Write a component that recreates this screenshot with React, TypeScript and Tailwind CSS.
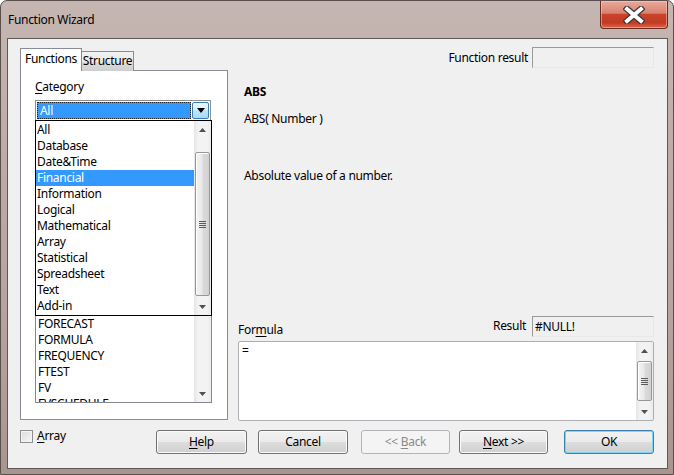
import React from "react";

const FONT = "font-['Noto_Sans',sans-serif] tracking-[-0.3px]";

function Arrow({ dir }: { dir: "up" | "down" }) {
  return (
    <svg width="7" height="4" viewBox="0 0 7 4">
      <path d={dir === "up" ? "M0 4 L3.5 0 L7 4Z" : "M0 0 L7 0 L3.5 4Z"} fill="#505050" />
    </svg>
  );
}

function Thumb({ h }: { h: string }) {
  return (
    <div
      className={`${h} mx-[1px] flex items-center justify-center rounded-[2px] border border-[#979797] bg-[linear-gradient(90deg,#f4f4f4,#e9e9e9_45%,#dadada_55%,#d2d2d2)] shadow-[inset_1px_1px_0_#fff]`}
    >
      <div className="flex flex-col gap-[1px]">
        <div className="h-[1px] w-[7px] bg-[#5a5a5a]" />
        <div className="h-[1px] w-[7px] bg-[#5a5a5a]" />
        <div className="h-[1px] w-[7px] bg-[#5a5a5a]" />
        <div className="h-[1px] w-[7px] bg-[#5a5a5a]" />
      </div>
    </div>
  );
}

function ScrollBar({ gap, thumb }: { gap?: string; thumb?: string }) {
  return (
    <div className="flex w-[17px] flex-col self-stretch bg-[linear-gradient(90deg,#e6e6e6,#f3f3f3_25%,#f3f3f3_75%,#ebebeb)]">
      <div className="flex h-[17px] shrink-0 items-center justify-center">
        <Arrow dir="up" />
      </div>
      {gap && <div className={gap} />}
      {thumb && <Thumb h={thumb} />}
      <div className="flex-1" />
      <div className="flex h-[17px] shrink-0 items-center justify-center">
        <Arrow dir="down" />
      </div>
    </div>
  );
}

function Btn({
  children,
  cls,
  variant = "normal",
}: {
  children: React.ReactNode;
  cls: string;
  variant?: "normal" | "disabled" | "default";
}) {
  const base =
    "flex h-[24px] items-center justify-center rounded-[3px] border text-[12px] leading-none";
  const v =
    variant === "disabled"
      ? "border-[#b0b4b8] bg-[#f4f4f4] text-[#8a8a8a]"
      : variant === "default"
      ? "border-[#3c7fb1] bg-[linear-gradient(#f2f2f2,#ebebeb_48%,#dddddd_52%,#cfcfcf)] text-black shadow-[inset_0_0_0_1px_#7fd3f3]"
      : "border-[#707070] bg-[linear-gradient(#f2f2f2,#ebebeb_48%,#dddddd_52%,#cfcfcf)] text-black shadow-[inset_0_0_0_1px_#fbfbfb]";
  return <div className={`${base} ${v} ${cls}`}>{children}</div>;
}

const categories = [
  "All",
  "Database",
  "Date&Time",
  "Financial",
  "Information",
  "Logical",
  "Mathematical",
  "Array",
  "Statistical",
  "Spreadsheet",
  "Text",
  "Add-in",
];

const functions = ["FORECAST", "FORMULA", "FREQUENCY", "FTEST", "FV", "FVSCHEDULE"];

export default function App() {
  return (
    <div
      className={`${FONT} flex h-[475px] w-[674px] flex-col overflow-hidden rounded-t-[7px] border border-[#5b4f4d] bg-[linear-gradient(180deg,#c6b6b2_0%,#bdaca8_30%,#b5a29e_70%,#a9958f_100%)] text-[12px] text-black`}
    >
      {/* title bar */}
      <div className="flex h-[37px] shrink-0 items-start">
        <div className="ml-[7px] mt-[11px] text-[12px] leading-[16px] text-black">Function Wizard</div>
        <div className="ml-auto mr-[5px] flex h-[28px] w-[68px] items-center justify-center rounded-b-[4px] border border-t-0 border-[#6b2a20] bg-[linear-gradient(180deg,#e9a99c_0%,#d98271_45%,#c9442c_50%,#c23a23_80%,#d9654a_100%)] shadow-[inset_0_0_0_1px_rgba(255,220,210,0.45)]">
          <svg width="22" height="18" viewBox="0 0 22 18">
            <path d="M4 3 L18 15 M18 3 L4 15" stroke="#3a3a3a" strokeWidth="6.5" strokeLinecap="square" />
            <path d="M4 3 L18 15 M18 3 L4 15" stroke="#ffffff" strokeWidth="4" strokeLinecap="square" />
          </svg>
        </div>
      </div>

      {/* client area */}
      <div className="ml-[6px] mr-[5px] flex h-[431px] flex-col border border-[#5e5856] bg-[#f0f0f0] px-[12px] pt-[8px]">
        {/* upper section */}
        <div className="flex h-[374px]">
          {/* left column: tab control */}
          <div className="flex w-[208px] flex-col pt-[1px]">
            <div className="relative z-10 flex h-[23px] items-end">
              <div className="flex h-[23px] w-[62px] items-start justify-center border border-b-0 border-[#898c95] bg-white pt-[2px] leading-[16px]">
                Functions
              </div>
              <div className="flex h-[20px] w-[52px] items-start justify-center border border-l-0 border-b-0 border-[#898c95] bg-[linear-gradient(#f2f2f2,#ebebeb_50%,#dddddd_50%,#cfcfcf)] pt-[1px] leading-[16px]">
                Structure
              </div>
            </div>
            <div className="-mt-[1px] flex h-[350px] flex-col border border-[#898c95] bg-white pl-[14px] pt-[8px]">
              <div className="leading-[16px]">
                <span className="underline underline-offset-2">C</span>ategory
              </div>
              <div className="relative mt-[5px] flex w-[177px] flex-col">
                {/* combo */}
                <div className="flex h-[21px] w-[176px] border border-[#8e8f8f] bg-white p-[1px]">
                  <div className="flex flex-1 items-center border border-dotted border-[#222] bg-[#3399ff] pl-[2px] leading-[16px] text-white">
                    All
                  </div>
                  <div className="ml-[1px] flex w-[17px] items-center justify-center rounded-[2px] border border-[#3c7fb1] bg-[linear-gradient(#eaf6fd,#d9f0fc_50%,#bee6fd_50%,#a7d9f5)]">
                    <svg width="8" height="5" viewBox="0 0 8 5">
                      <path d="M0 0 L8 0 L4 5Z" fill="#000" />
                    </svg>
                  </div>
                </div>
                {/* function listbox (upper rows hidden behind the open dropdown) */}
                <div className="mt-[1px] flex h-[281px] w-[177px] overflow-hidden border border-[#828790] bg-white">
                  <div className="flex flex-1 flex-col overflow-hidden pl-[2px] pt-[193px]">
                    {functions.map((f) => (
                      <div key={f} className="h-[16px] shrink-0 leading-[16px]">
                        {f}
                      </div>
                    ))}
                  </div>
                  <ScrollBar />
                </div>
                {/* dropdown list (open) */}
                <div className="absolute left-0 top-[20px] z-20 flex h-[196px] w-[177px] border border-black bg-white">
                  <div className="flex flex-1 flex-col pt-[1px]">
                    {categories.map((c) => (
                      <div
                        key={c}
                        className={`h-[16px] pl-[1px] leading-[16px] ${
                          c === "Financial" ? "bg-[#3399ff] text-white" : ""
                        }`}
                      >
                        {c}
                      </div>
                    ))}
                  </div>
                  <ScrollBar gap="h-[14px]" thumb="h-[144px]" />
                </div>
              </div>
            </div>
          </div>

          {/* right column */}
          <div className="ml-[10px] flex w-[416px] flex-col">
            <div className="flex h-[21px] items-center justify-end">
              <span className="mr-[4px] leading-[16px]">Function result</span>
              <div className="h-[21px] w-[122px] border border-b-[#e8e8e8] border-l-[#9a9a9a] border-r-[#e8e8e8] border-t-[#9a9a9a] bg-[#f0f0f0]" />
            </div>
            <div className="ml-[6px] mt-[16px] font-bold leading-[16px]">ABS</div>
            <div className="ml-[6px] mt-[11px] leading-[16px]">ABS( Number )</div>
            <div className="ml-[6px] mt-[41px] leading-[16px]">Absolute value of a number.</div>
            <div className="flex-1" />
            <div className="flex h-[21px] items-end">
              <span className="relative top-[1px] leading-[16px]">
                For<span className="underline underline-offset-2">m</span>ula
              </span>
              <span className="mb-[3px] ml-auto mr-[6px] leading-[16px]">Result</span>
              <div className="flex h-[21px] w-[122px] items-center border border-b-[#e8e8e8] border-l-[#9a9a9a] border-r-[#e8e8e8] border-t-[#9a9a9a] bg-[#f0f0f0] pl-[2px] leading-[16px]">
                #NULL!
              </div>
            </div>
            <div className="mt-[4px] flex h-[80px] rounded-[2px] border border-[#acaeb4] bg-white">
              <div className="flex-1 pl-[3px] pt-[1px] leading-[16px]">=</div>
              <ScrollBar gap="h-[2px]" thumb="h-[40px]" />
            </div>
          </div>
        </div>

        {/* bottom row */}
        <div className="mt-[7px] flex items-start">
          <div className="flex items-center">
            <div className="h-[13px] w-[13px] border border-[#8f8f8f] bg-[linear-gradient(135deg,#dcdcdc,#f6f6f6)] shadow-[inset_0_0_0_1px_#f4f4f4]" />
            <span className="ml-[4px] leading-[16px]">
              <span className="underline underline-offset-2">A</span>rray
            </span>
          </div>
          <div className="mr-[1px] mt-[2px] ml-auto flex">
            <Btn cls="w-[91px]">
              <span>
                <span className="underline underline-offset-2">H</span>elp
              </span>
            </Btn>
            <Btn cls="ml-[11px] w-[90px]">Cancel</Btn>
            <Btn cls="ml-[13px] w-[89px]" variant="disabled">
              <span>
                &lt;&lt; <span className="underline underline-offset-2">B</span>ack
              </span>
            </Btn>
            <Btn cls="ml-[9px] w-[89px]">
              <span>
                <span className="underline underline-offset-2">N</span>ext &gt;&gt;
              </span>
            </Btn>
            <Btn cls="ml-[16px] w-[90px]" variant="default">
              OK
            </Btn>
          </div>
        </div>
      </div>
    </div>
  );
}
